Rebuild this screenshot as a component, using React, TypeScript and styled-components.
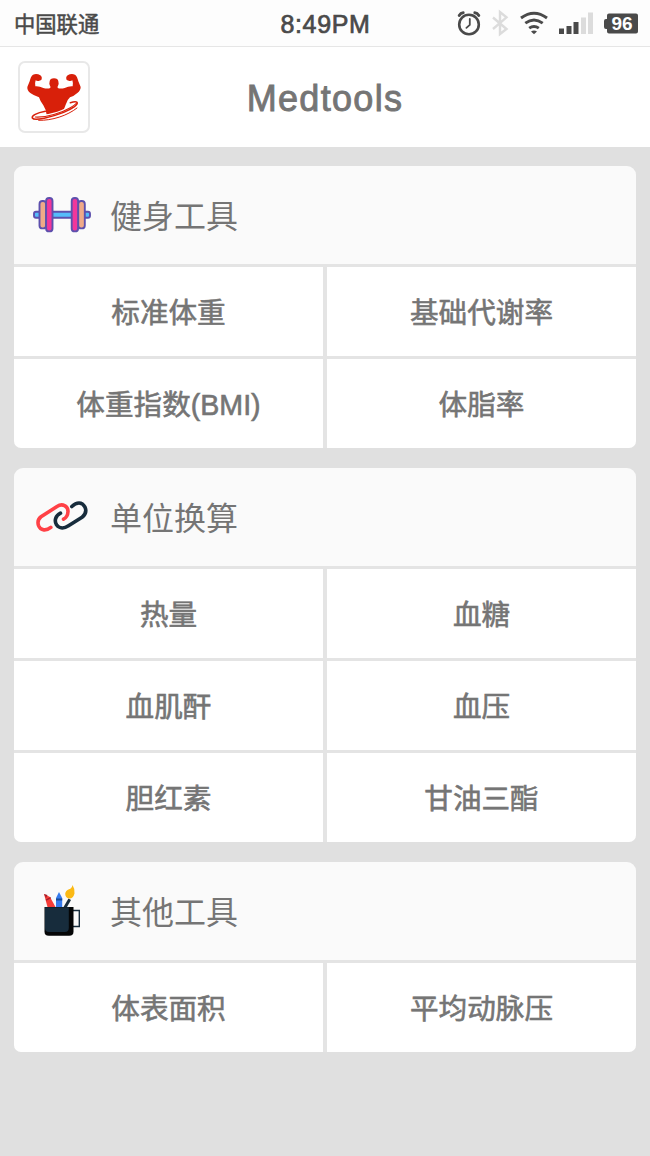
import React from 'react';
import styled, { createGlobalStyle } from 'styled-components';

const GlobalStyle = createGlobalStyle`
  * { box-sizing: border-box; }
  html, body { margin: 0; padding: 0; background: #e0e0e0; }
  body { font-family: "Liberation Sans", "Noto Sans CJK SC", sans-serif; }
`;

const Screen = styled.div`
  width: 650px;
  min-height: 1156px;
  background: #e0e0e0;
  color: #757575;
`;

const StatusBar = styled.header`
  height: 47px;
  display: grid;
  grid-template-columns: 1fr auto 1fr;
  align-items: center;
  padding: 1px 11px 0 14px;
  background: #fdfdfd;
  border-bottom: 1px solid #e6e6e6;
  color: #4a4a4a;
`;

const Carrier = styled.span`
  margin-top: -1px;
  font: 400 21.3px/30px "Noto Sans CJK SC", sans-serif;
  -webkit-text-stroke: 0.5px currentColor;
`;

const Clock = styled.span`
  margin-left: -2px;
  font-size: 25px;
  line-height: 30px;
  letter-spacing: 0.65px;
  -webkit-text-stroke: 0.7px currentColor;
`;

const StatusIcons = styled.div`
  display: flex;
  justify-content: flex-end;
`;

const NavBar = styled.div`
  height: 100px;
  display: grid;
  grid-template-columns: 90px 1fr 90px;
  align-items: center;
  background: #fff;
`;

const Avatar = styled.div`
  width: 72px;
  height: 72px;
  margin-left: 18px;
  border: 2px solid #e8e8e8;
  border-radius: 7px;
  background: #fff;
`;

const AvatarDrawing = styled.svg`
  display: block;
`;

const Title = styled.h1`
  margin: 4px 0 0;
  text-align: center;
  font-size: 36px;
  line-height: 44px;
  font-weight: 400;
  letter-spacing: 1.3px;
  -webkit-text-stroke: 0.9px currentColor;
`;

const Content = styled.main`
  display: flex;
  flex-direction: column;
  gap: 20px;
  padding: 19px 14px 0;
`;

const Card = styled.section`
  display: flex;
  flex-direction: column;
  gap: 3px;
  overflow: hidden;
  border-radius: 9px 9px 7px 7px;
  background: #e4e4e4;
`;

const CardHeader = styled.div`
  height: 98px;
  display: flex;
  align-items: center;
  gap: 17px;
  padding-left: 17px;
  background: #fafafa;
`;

const CardTitle = styled.h2`
  margin: 0 0 2px;
  font: 400 32px/48px "Noto Sans CJK SC", sans-serif;
`;

const Grid = styled.div`
  display: grid;
  grid-template-columns: 1fr 1fr;
  grid-auto-rows: 89px;
  gap: 3px 4px;
`;

const Cell = styled.button`
  display: flex;
  align-items: center;
  justify-content: center;
  border: 0;
  padding: 2px 0 0;
  background: #fff;
  color: #757575;
  font: 400 28.6px/42px "Liberation Sans", "Noto Sans CJK SC", sans-serif;
  -webkit-text-stroke: 0.6px currentColor;
`;

const StatusGlyphs = () => (
  <svg width="184" height="40" viewBox="455 4 184 40" fill="none">
    <g stroke="#4a4a4a" strokeLinecap="round">
      <circle cx="469" cy="24.500" r="9.8" strokeWidth="2.6" />
      <path d="M469.8 19v5.8l-3.4 3" strokeWidth="1.8" />
      <path d="M459.2 15.400q1.4-2.400 4-2.600M478.8 15.400q-1.4-2.400-4-2.600" strokeWidth="2.9" />
    </g>
    <path d="M493 17.5l13.5 11.5-6.5 5V12l6.5 5.3L493 29" stroke="#dcdcdc" strokeWidth="2.4" />
    <g stroke="#4a4a4a" strokeWidth="2.9">
      <path d="M521 18q13-9.600 26 0" />
      <path d="M525.3 23.2q8.7-6.400 17.4 0" />
      <path d="M529.2 28.2q4.8-3.500 9.6 0" />
    </g>
    <path d="M531 31.400q3-2 6 0l-3 2.900z" fill="#4a4a4a" />
    <path d="M559 28.500h5V34h-5zM566.500 26h5v8h-5zM573.500 22h5v12h-5z" fill="#4a4a4a" />
    <path d="M581 17.500h5V34h-5zM588 12.500h5V34h-5z" fill="#dcdcdc" />
    <path d="M609 13.500h27q2 0 2 2v16q0 2-2 2h-27q-2 0-2-2V29h-1q-2 0-2-2v-6q0-2 2-2h1v-3.500q0-2 2-2z" fill="#4a4a4a" />
    <text x="622" y="30.200" textAnchor="middle" fill="#fff" fontSize="19" fontWeight="700" fontFamily="Liberation Sans, sans-serif">96</text>
  </svg>
);

const Athlete = () => (
  <AvatarDrawing width="68" height="68" viewBox="-12 -15 204 204">
    <path
      d="M77 40Q78 31 90 31Q102 31 103 40L104 47Q103 52 101 55L101 60Q110 63 122 60Q134 54 146 55Q148 45 145 37Q140 40 134 38L128 36Q124 27 131 22Q142 15 153 20Q160 25 163 40L170 57Q170 68 160 75Q149 85 138 88Q129 96 125 110L119 126Q97 138 68 141Q66 124 58 112Q49 101 45 88Q30 83 19 75Q9 68 10 57L17 40Q20 25 27 20Q38 15 49 22Q56 27 52 36L46 38Q40 40 35 37Q32 45 34 55Q46 54 58 60Q70 63 79 60L79 55Q77 52 76 47Z"
      fill="#d8200a"
    />
    <g fill="none" strokeLinecap="round">
      <path d="M50 143C80 143 122 130 148 110" stroke="#fff" strokeWidth="6" />
      <path d="M64 130C38 135 22 143 25 150C31 160 83 147 119 133C147 122 164 109 159 103C156 100 149 101 139 104" stroke="#d8200a" strokeWidth="4.500" />
      <path d="M34 147C67 149 114 134 139 119Q153 111 158 105" stroke="#d8200a" strokeWidth="3.500" />
      <path d="M44 157C84 158 130 143 159 120" stroke="#d8200a" strokeWidth="3" />
    </g>
  </AvatarDrawing>
);

const Dumbbell = () => (
  <svg width="62" height="56" viewBox="31 187 62 56">
    <g stroke="#5d50ad" strokeWidth="1.900">
      <rect x="34" y="211.700" width="56" height="6" rx="2" fill="#55bcfa" />
      <rect x="39.500" y="201" width="6.600" height="27.400" rx="3" fill="#f0aa88" />
      <rect x="78.200" y="201" width="6.600" height="27.400" rx="3" fill="#f0aa88" />
      <rect x="46.100" y="198" width="6.400" height="33.400" rx="3" fill="#f1369b" />
      <rect x="71.700" y="198" width="6.400" height="33.400" rx="3" fill="#f1369b" />
    </g>
  </svg>
);

const Links = () => (
  <svg width="62" height="56" viewBox="31 489 62 56" fill="none" strokeWidth="3.600" strokeLinecap="round">
    <path d="M50.800 527.400C46.500 531 40.500 531 38.500 525.500Q36.800 520 41 516.800L57 506.500C62.500 502.800 68 506 68 511.500Q67.700 517 63.500 519.200" stroke="#ff4146" />
    <path d="M60.500 513.200C55.500 515.700 54 520.500 56.500 524.800C59.500 529 64.500 528.500 68.500 525.800L82 517.400Q87.500 513 85 507.200C82 501.500 76.500 502 71.800 506.500" stroke="#172c3c" />
  </svg>
);

const PencilCup = () => (
  <svg width="62" height="56" viewBox="31 883 62 56">
    <path d="M44 894l6 3 5.500 10h-8z" fill="#f63c38" />
    <path d="M44 894l3.500 1-1.500 3z" fill="#a51f29" />
    <path d="M46 900.200l4.700-2.600" stroke="#a51f29" strokeWidth="1.400" />
    <path d="M59 892l3.200 6v9H56v-9z" fill="#367bed" />
    <path d="M56 899.500h6.200" stroke="#174996" strokeWidth="2" />
    <path d="M63.500 907l5-8.500 2.500 1.500-4 7z" fill="#172c3c" />
    <path d="M72.500 885q2.600 4 2 8.500-1.400 5.300-5.300 5-4-.7-4-4.800.4-3.200 3.800-4.400 3-.9 3.500-4.300z" fill="#fbb914" />
    <path d="M72 910.500h7.300v16H72" fill="none" stroke="#172c3c" strokeWidth="1.400" />
    <path d="M44.500 907h29v24.500q0 4.300-4.300 4.300H48.800q-4.300 0-4.300-4.300z" fill="#050607" />
    <path d="M45 907.300h23.800v20.700q0 4-4 4H49q-4 0-4-4z" fill="#172c3c" />
  </svg>
);

const sections = [
  { title: '健身工具', Icon: Dumbbell, items: ['标准体重', '基础代谢率', '体重指数(BMI)', '体脂率'] },
  { title: '单位换算', Icon: Links, items: ['热量', '血糖', '血肌酐', '血压', '胆红素', '甘油三酯'] },
  { title: '其他工具', Icon: PencilCup, items: ['体表面积', '平均动脉压'] },
];

export default function App() {
  return (
    <>
      <GlobalStyle />
      <Screen>
        <StatusBar>
          <Carrier>中国联通</Carrier>
          <Clock>8:49PM</Clock>
          <StatusIcons><StatusGlyphs /></StatusIcons>
        </StatusBar>
        <NavBar>
          <Avatar><Athlete /></Avatar>
          <Title>Medtools</Title>
        </NavBar>
        <Content>
          {sections.map(({ title, Icon, items }) => (
            <Card key={title}>
              <CardHeader>
                <Icon />
                <CardTitle>{title}</CardTitle>
              </CardHeader>
              <Grid>
                {items.map((item) => <Cell key={item}>{item}</Cell>)}
              </Grid>
            </Card>
          ))}
        </Content>
      </Screen>
    </>
  );
}
